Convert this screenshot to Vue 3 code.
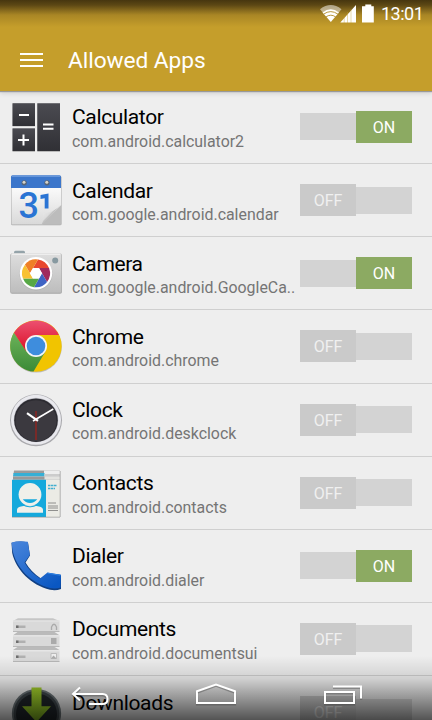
<script setup>
const apps = [
  { name: 'Calculator', pkg: 'com.android.calculator2', icon: 'calculator', on: true },
  { name: 'Calendar', pkg: 'com.google.android.calendar', icon: 'calendar', on: false },
  { name: 'Camera', pkg: 'com.google.android.GoogleCa..', icon: 'camera', on: true },
  { name: 'Chrome', pkg: 'com.android.chrome', icon: 'chrome', on: false },
  { name: 'Clock', pkg: 'com.android.deskclock', icon: 'clock', on: false },
  { name: 'Contacts', pkg: 'com.android.contacts', icon: 'contacts', on: false },
  { name: 'Dialer', pkg: 'com.android.dialer', icon: 'dialer', on: true },
  { name: 'Documents', pkg: 'com.android.documentsui', icon: 'documents', on: false },
  { name: 'Downloads', pkg: 'com.android.providers.do..', icon: 'downloads', on: false },
]
const blades = [
  { c: '#e8472f', a: 0 }, { c: '#a02a5e', a: 60 }, { c: '#3f63c4', a: 120 },
  { c: '#57a845', a: 180 }, { c: '#f8c132', a: 240 }, { c: '#ef7f26', a: 300 },
]
</script>

<template>
  <div class="screen">
    <header class="top">
      <div class="status">
        <svg class="signals" width="55" height="20" viewBox="0 0 55 20">
          <path d="M0 5.2Q10.8 -3.2 21.5 5.2L18.5 8.8Q10.8 3.2 3 8.8Z" fill="#fff" opacity=".5" />
          <path d="M2.500 8.400Q10.800 2 19 8.400L10.800 18Z" fill="#fff" />
          <path d="M3.500 10.200Q10.800 5 18 10.200M5.800 13Q10.800 9.400 15.800 13" fill="none" stroke="#b18c2a" stroke-width=".9" />
          <path d="M20.300 18.600L36 1V18.600Z" fill="#fff" />
          <path d="M24.200 12V19M27.500 8V19M31 5V19" stroke="#c39d2b" stroke-width=".4" />
          <path d="M45.300 .5h6v1.800h2.500v16.300H42V2.300h3.300Z" fill="#fff" />
        </svg>
        <span class="clock">13:01</span>
      </div>
      <div class="bar">
        <div class="menu"><i></i><i></i><i></i></div>
        <h1>Allowed Apps</h1>
      </div>
    </header>

    <main class="list">
      <div v-for="app in apps" :key="app.name" class="row">
        <svg class="icon" width="54" height="54" viewBox="0 0 54 54">
          <defs>
            <linearGradient id="dark" x2="0" y2="1"><stop stop-color="#4b4b51" /><stop offset="1" stop-color="#303035" /></linearGradient>
            <linearGradient id="paper" x2="0" y2="1"><stop stop-color="#fafafa" /><stop offset="1" stop-color="#d9d9d9" /></linearGradient>
            <linearGradient id="body" x2="0" y2="1"><stop stop-color="#dedede" /><stop offset="1" stop-color="#bdbdbd" /></linearGradient>
            <linearGradient id="curl" x1="0" y1="0" x2="1" y2="1"><stop stop-color="#f4f4f4" /><stop offset=".42" stop-color="#ddd" /><stop offset=".58" stop-color="#8c8c8c" /><stop offset="1" stop-color="#d8d8d8" /></linearGradient>
            <linearGradient id="phone" x2=".8" y2="1"><stop stop-color="#4a86dc" /><stop offset="1" stop-color="#0a57c2" /></linearGradient>
            <linearGradient id="red" x2="0" y2="1"><stop stop-color="#ec5070" /><stop offset="1" stop-color="#dc1128" /></linearGradient>
            <linearGradient id="green" x2="0" y2="1"><stop stop-color="#6cb35a" /><stop offset="1" stop-color="#3b8a36" /></linearGradient>
            <linearGradient id="arrow" x2="0" y2="1"><stop stop-color="#a3cf2b" /><stop offset="1" stop-color="#87bd23" /></linearGradient>
          </defs>

          <g v-if="app.icon === 'calculator'">
            <path d="M3.500 3.200H26V26H3.500ZM3.500 28.300H26V51.500H3.500ZM28.300 3.200H51V51.500H28.300Z" fill="#999" transform="translate(0 .6)" opacity=".6" />
            <path d="M3.500 3.200H26V26H3.500Z" fill="url(#dark)" /><path d="M3.500 28.300H26V51H3.500Z" fill="url(#dark)" /><path d="M28.300 3.200H51V51H28.300Z" fill="url(#dark)" />
            <path d="M10 15H20M9 40H20M14.500 34.500V45.500M34 24.500H44.500M34 28.800H44.500" stroke="#fff" stroke-width="2" />
          </g>

          <g v-else-if="app.icon === 'calendar'">
            <rect x="2" y="3" width="50.500" height="49.300" rx="1.500" fill="#aaa" />
            <path d="M2.500 15H52V36L34 51.500H2.500Z" fill="url(#paper)" />
            <path d="M2 15V4Q2 2.300 3.500 2.300H50.500Q52 2.300 52 4V15Z" fill="#3b76cb" />
            <path d="M3 3.200H51" stroke="#79a5e2" />
            <circle cx="15.200" cy="9.800" r="2.600" fill="#596574" /><circle cx="38" cy="9.800" r="2.600" fill="#596574" />
            <circle cx="15" cy="9.300" r="1.500" fill="#d6d4cb" /><circle cx="37.800" cy="9.300" r="1.500" fill="#d6d4cb" />
            <path d="M32.500 51.800L52.300 32V51.800Z" fill="#bcbcbc" />
            <path d="M32.500 51.800Q35 47 34 40.500Q45 39.500 52.300 31.500Z" fill="url(#curl)" />
            <text x="9.500" y="45" class="three">3</text>
            <path d="M31.500 22L39.500 20.500V35.500H35.700V25.200L31.500 26Z" fill="#2a74d4" />
          </g>

          <g v-else-if="app.icon === 'camera'">
            <rect x="5" y="4.800" width="11" height="4" rx="1.500" fill="#94a3a9" />
            <rect x="1.200" y="7.600" width="51.800" height="40.200" rx="2" fill="#a5a5a5" />
            <rect x="1.700" y="7.300" width="50.800" height="39.400" rx="1.500" fill="url(#body)" />
            <path d="M3 8.200H51" stroke="#f5f5f5" />
            <circle cx="46.200" cy="14.600" r="3" fill="#8799a0" />
            <circle cx="27" cy="28" r="16.400" fill="#b0b0b0" /><circle cx="27" cy="27.300" r="16.200" fill="#fff" />
            <g transform="translate(27 27.300)">
              <path v-for="b in blades" :key="b.a" :transform="`rotate(${b.a})`" d="M-3 -5.200L2 -13.900A14 14 0 0 1 13 -5.200Z" :fill="b.c" />
              <path d="M-3 -5.300H3L6 0L3 5.300H-3L-6 0Z" fill="#fff" />
            </g>
          </g>

          <g v-else-if="app.icon === 'chrome'">
            <circle cx="27" cy="27.800" r="25.800" fill="#bbb" />
            <circle cx="27" cy="27" r="25.700" fill="#f1c400" />
            <path d="M27 27L17.500 32.500L5 13.500A25.700 25.700 0 0 0 24.500 52.600L36.500 32.500Z" fill="url(#green)" />
            <path d="M27 16H49.900A25.700 25.700 0 0 0 5 13.700L17 32L27 27Z" fill="url(#red)" />
            <circle cx="27" cy="27" r="11" fill="#f5f5f5" /><circle cx="27" cy="27" r="9.300" fill="#3e8ddd" />
          </g>

          <g v-else-if="app.icon === 'clock'">
            <circle cx="27" cy="27.300" r="26" fill="#a9a9ad" /><circle cx="27" cy="26.800" r="25" fill="#e9e9ee" />
            <circle cx="27" cy="27" r="22.300" fill="#c2c2c9" /><circle cx="27" cy="27.200" r="21.800" fill="#2c2b31" /><circle cx="27" cy="27.800" r="20.500" fill="#3b393f" />
            <path d="M27 18V47" stroke="#8e2622" stroke-width="1.500" />
            <path d="M18 20.200L29 27.800" stroke="#fff" stroke-width="2.200" /><path d="M24 28L44.300 16" stroke="#fff" stroke-width="1.600" />
          </g>

          <g v-else-if="app.icon === 'contacts'">
            <path d="M5 4.500H51V8H4.500Z" fill="#9b9b9b" /><path d="M35 4.500H51V8H35Z" fill="#eee" />
            <path d="M4.500 7H35.500V10.500H4Z" fill="#35afd5" /><path d="M4 10.500H51V13.700H4Z" fill="#999" /><path d="M35.500 8H51V10.500H35.500Z" fill="#ccc" /><path d="M35.500 10.500H51V13.700H35.500Z" fill="#e3e3e0" />
            <path d="M3 13.800H37V51H3Z" fill="#15a9dc" /><path d="M37 13.800H51V51H37Z" fill="#ebebe5" />
            <path d="M3 51.200H51M51.200 5V51" stroke="#888" stroke-width=".6" />
            <path d="M8 46.700V44Q8 41 12 40.500L17 39.500H25L30 40.500Q34 41 34 44V46.700Z" fill="#f0f0ea" />
            <circle cx="21" cy="28.500" r="11.400" fill="#f0f0ea" />
            <path d="M13.800 33.300H28.300Q25.500 37 21 37T13.800 33.300Z" fill="#15a9dc" />
            <path d="M12.500 38.200Q21 43.500 29.500 38.200" stroke="#15a9dc" stroke-width="1" fill="none" />
            <path d="M39 19.500H47.500M39 22.500H46" stroke="#43afd0" stroke-width="1.700" stroke-dasharray="2.500 .5" />
            <path d="M39 37H47M39 40H49M39 42H49M39 44.500H49" stroke="#777" stroke-width=".8" />
          </g>

          <g v-else-if="app.icon === 'dialer'">
            <path d="M2.500 4Q10 1.500 19 3.500L21 16.500L16.500 23.500Q22 33 32 39.500L39 34.300L52 36V50Q47 52 41 50.800C22 46 7 31 3.200 14Z" fill="#103f83" />
            <path d="M2.500 3.500Q10 1.500 18.800 2.800L20.800 16L15.500 23.500Q21 33.500 31 39.500L38.500 33.600L52 35.800L51.500 48.500Q46.500 50 41 49C22 44 7 29 3.500 11Z" fill="url(#phone)" />
            <path d="M38.500 34.200L51.500 36.300" stroke="#2f83e4" />
          </g>

          <g v-else-if="app.icon === 'documents'">
            <path d="M9 6.200H44L50.500 9H4Z" fill="#c6c6c6" /><path d="M10 19H44L50.500 23.200H4ZM10 34H44L50.500 38H4Z" fill="#bababa" />
            <g v-for="y in [8.500, 23.500, 38.500]" :key="y" :transform="`translate(0 ${y})`">
              <path d="M4 0H50.500V11H4Z" fill="#d9d9d9" /><path d="M4 .5H50.500" stroke="#e8e8e8" /><path d="M4 11H50.500" stroke="#b8b8b8" />
              <path d="M7 5H16.500V7.500H7Z" fill="#b0b0b0" /><path d="M7 5H9.500V7.500H7Z" fill="#6e6e6e" />
            </g>
            <path d="M42.500 17.500V15Q45 9.500 47.500 15V17.500M42.500 16V18M47.500 16V18" fill="none" stroke="#aaa" stroke-width="1.300" />
            <path d="M42 26H47.500V32H42Z" fill="#aaa" /><path d="M42 41.500H47.500V46.500H42Z" fill="#eee" stroke="#bbb" /><path d="M42 46.500L44.500 43.500L47.500 46.500Z" fill="#aaa" />
          </g>

          <g v-else>
            <circle cx="27.500" cy="28.500" r="24.600" fill="#6d767a" /><circle cx="27.500" cy="28.500" r="22.800" fill="#40484d" /><circle cx="27.500" cy="29" r="20.500" fill="#20262b" />
            <path d="M22.500 2.500H32.500V21.300H42L27.500 37L13 21.300H22.500Z" fill="url(#arrow)" />
          </g>
        </svg>
        <div class="text">
          <div class="name">{{ app.name }}</div>
          <div class="pkg">{{ app.pkg }}</div>
        </div>
        <div class="toggle" :class="{ on: app.on }"><span class="thumb">{{ app.on ? 'ON' : 'OFF' }}</span></div>
      </div>
    </main>

    <nav class="nav">
      <svg class="navicons" width="432" height="50" viewBox="0 0 432 50">
        <g fill="none" stroke="#333" stroke-width="2.200" opacity=".35" transform="translate(0 1.300)">
          <path d="M80 18L73 24L80 30M73 24H102Q107 24 107 29T102 34H89" /><path d="M197 33V21.300L216 14.500L235 21.300V33Z" /><path d="M325 22H354V33H325ZM333 16.500H361V28.500" />
        </g>
        <g fill="none" stroke="#fff" stroke-width="2">
          <path d="M80 17.500L73 24L80 30.500M73 24H102.500Q107.500 24 107.500 29T102.500 34H89" /><path d="M197 33V21.300L216 14.500L235 21.300V33Z" /><path d="M325 22H354V33H325ZM333 16.500H361V28.500" />
        </g>
      </svg>
    </nav>
  </div>
</template>

<style>
body { margin: 0; }
</style>

<style scoped>
.screen { width: 432px; height: 720px; position: relative; overflow: hidden; background: #eee; font-family: Roboto, "Liberation Sans", sans-serif; display: flex; flex-direction: column; }
.top { height: 91px; flex: none; box-sizing: border-box; background: linear-gradient(#46360f 0, #5c4714 5px, #a98625 15px, rgba(197,158,43,0) 27px), #c59e2b; box-shadow: 0 1px 1px #999, 0 2px 5px rgba(0,0,0,.15); z-index: 1; }
.status { height: 30px; display: flex; justify-content: flex-end; align-items: flex-start; padding-right: 8px; }
.signals { margin: 4px 6px 0 0; flex: none; }
.clock { width: 43px; color: #fff; font-size: 18px; line-height: 20px; margin-top: 4px; letter-spacing: -.5px; white-space: nowrap; }
.bar { height: 59px; display: flex; align-items: center; color: #fff; }
.menu { width: 23px; margin: 0 25px 0 20px; display: flex; flex-direction: column; gap: 4px; }
.menu i { height: 2px; background: #fff; }
h1 { margin: 3px 0 0; font-size: 22.700px; font-weight: 400; line-height: 30px; letter-spacing: -.05px; }
.list { flex: none; }
.row { height: 73.150px; box-sizing: border-box; border-bottom: 1px solid #cfcfcf; display: flex; align-items: flex-start; padding: 0 20px 0 9px; }
.icon { margin-top: 9px; flex: none; }
.text { width: 228px; margin: 14.400px 0 0 9px; white-space: nowrap; }
.name { font-size: 21px; line-height: 25px; letter-spacing: -.35px; color: #000; }
.pkg { font-size: 15.900px; line-height: 20px; margin-top: 1.500px; color: #757575; }
.toggle { width: 112px; height: 27px; margin-top: 22.450px; background: #d3d3d3; display: flex; align-items: center; flex: none; }
.thumb { width: 56px; height: 32px; background: #cacaca; color: #f0f0f0; font-size: 16px; line-height: 33px; text-align: center; flex: none; }
.toggle.on { justify-content: flex-end; }
.on .thumb { background: #8caa62; color: #fff; }
.three { font: 500 36px Roboto, sans-serif; fill: #2a74d4; }
.nav { position: absolute; left: 0; bottom: 0; width: 432px; height: 64px; display: flex; align-items: flex-end; background: linear-gradient(rgba(0,0,0,0), rgba(0,0,0,.12) 35%, rgba(0,0,0,.65)); z-index: 2; }
.navicons { display: block; }
</style>
